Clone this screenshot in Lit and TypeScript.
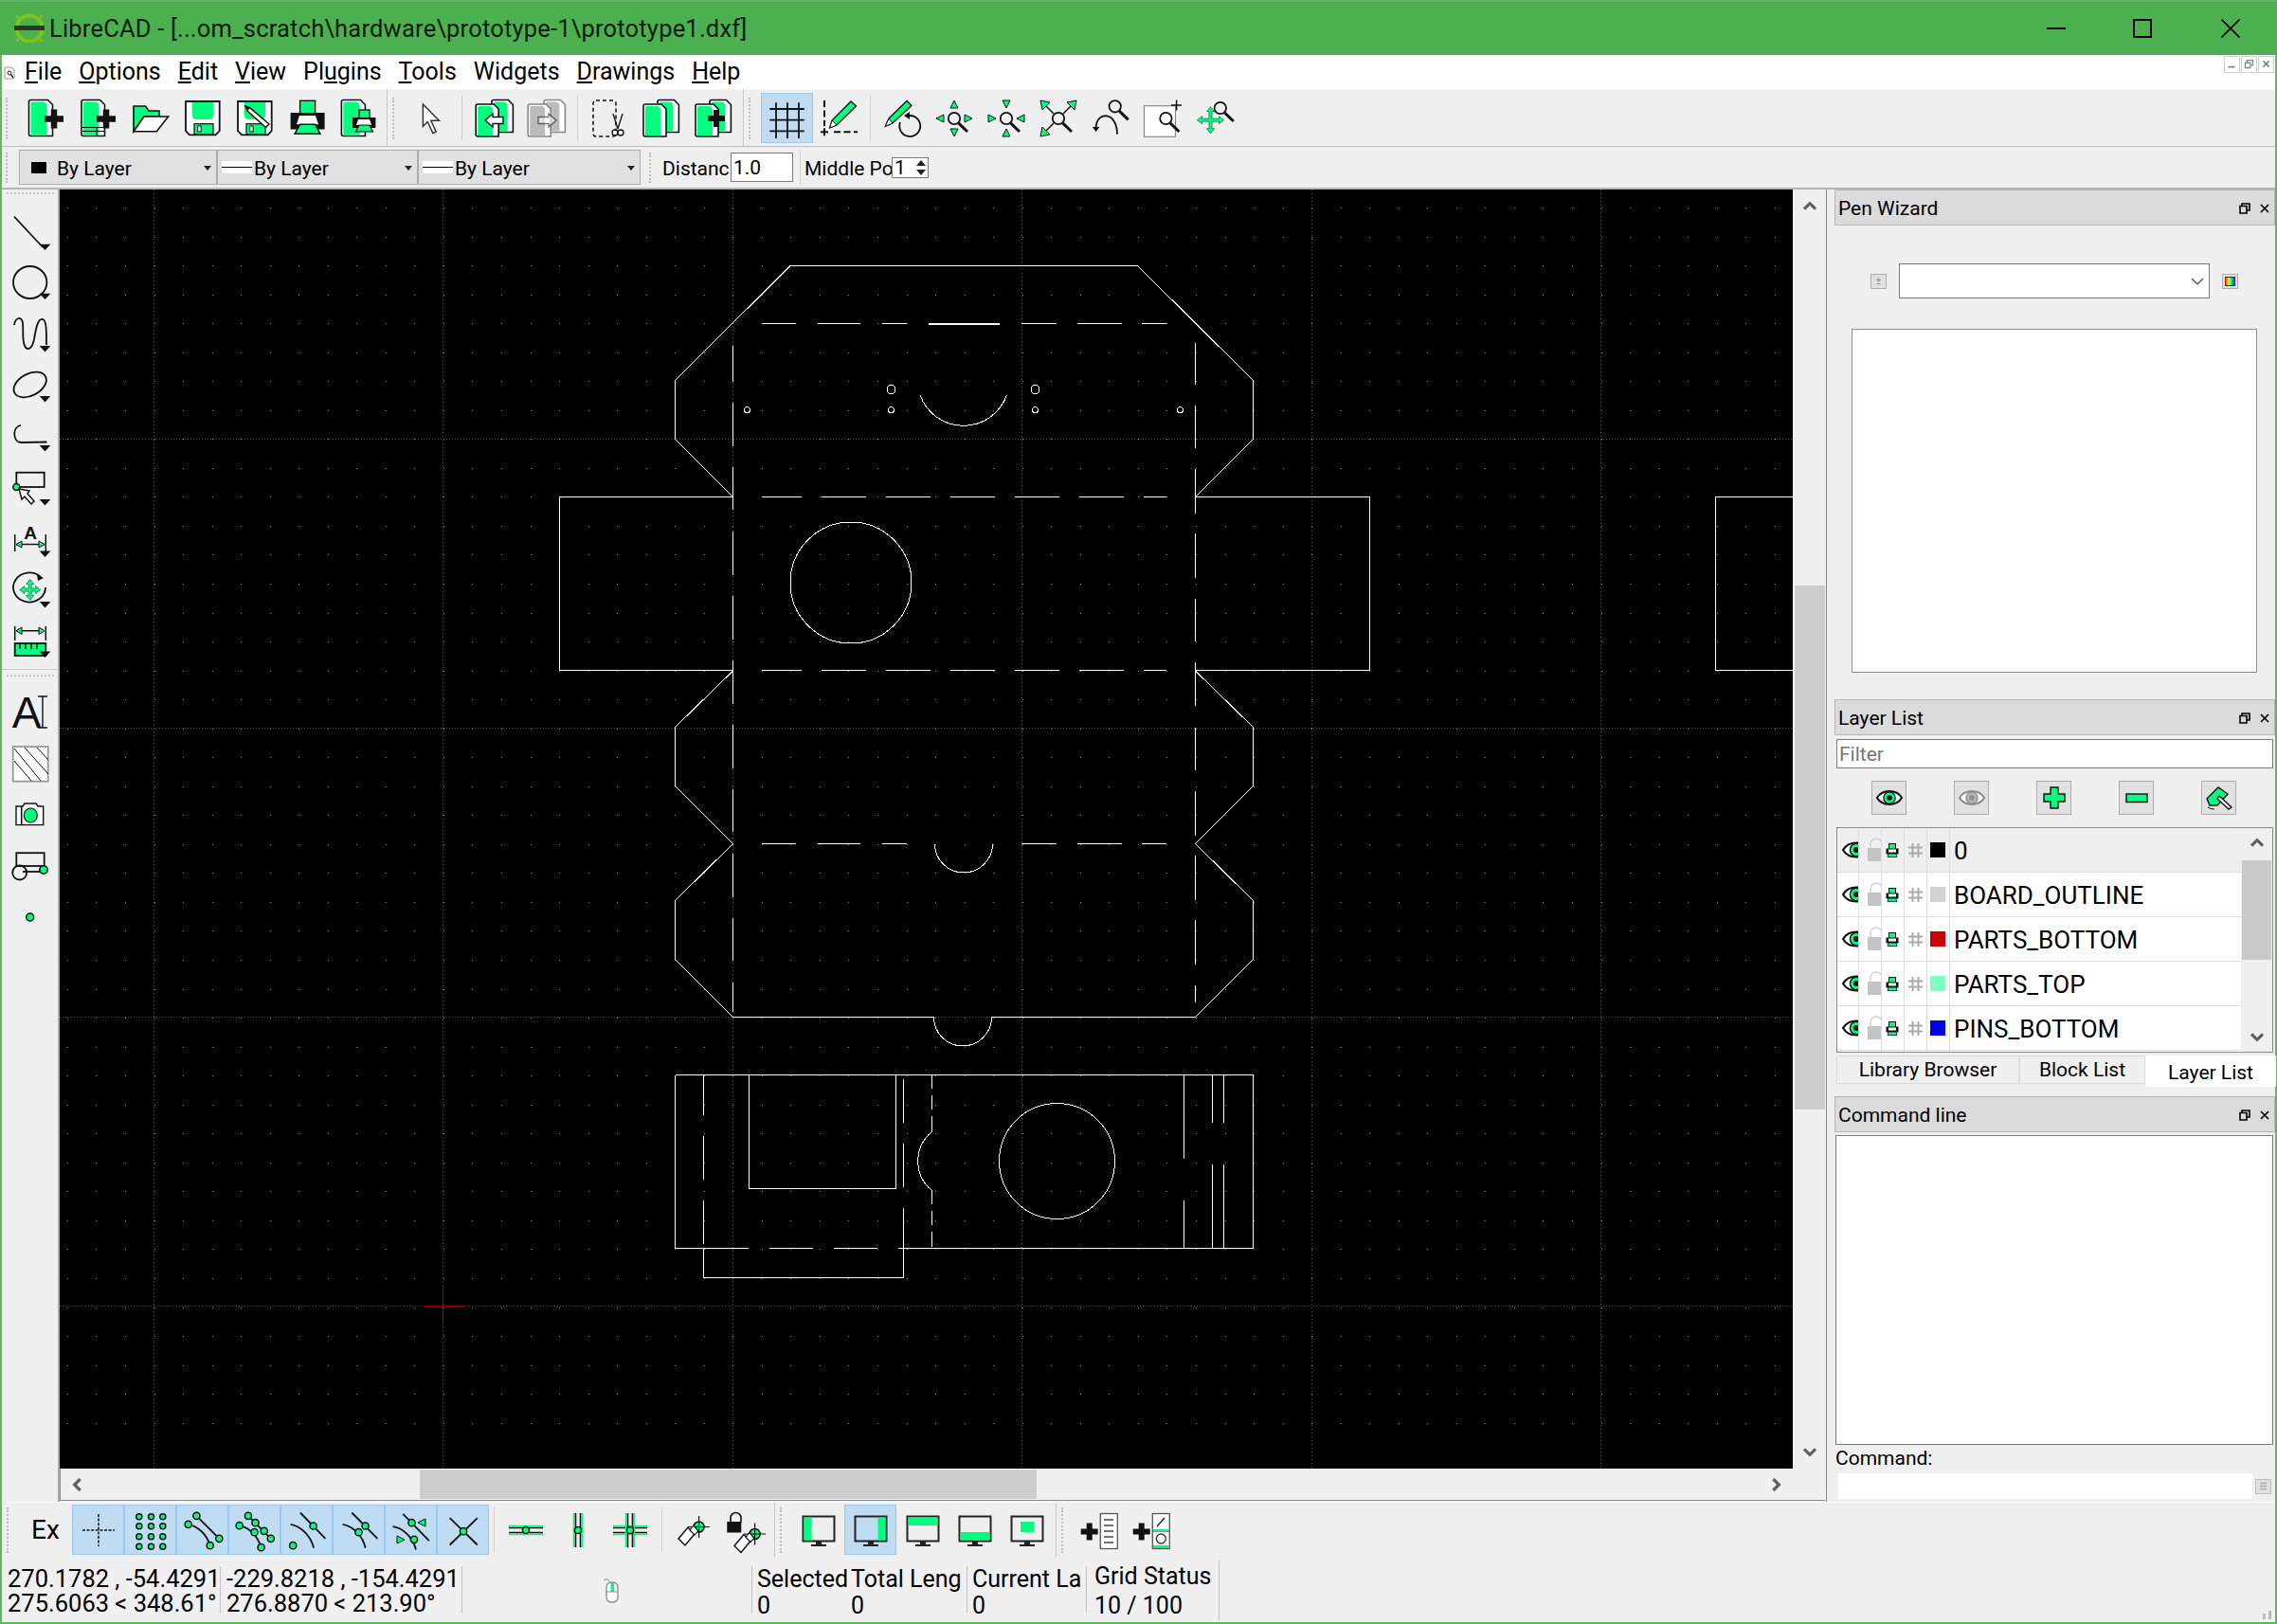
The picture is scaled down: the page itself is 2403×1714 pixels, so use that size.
import { LitElement, html, css, svg } from "lit";
import { customElement } from "lit/decorators.js";

const G = "#00ff7f";
const K = "#111";

// ---- small svg helpers for the toolbar icons (40x40 box unless noted)
const page = (x: number, y: number, w: number, h: number, fill = G, line = K) => svg`
  <path d="M${x + 2} ${y}H${x + w - 5}L${x + w} ${y + 5}V${y + h}H${x + 2}Q${x} ${y + h} ${x} ${y + h - 2}V${y + 2}Q${x} ${y} ${x + 2} ${y}Z" fill="#fff" stroke=${line} stroke-width="1.6"/>
  <path d="M${x + 3} ${y + 2}H${x + w - 10}Q${x + w - 6} ${y + 2} ${x + w - 6} ${y + 7}V${y + h - 1}H${x + 2}V${y + 3}Z" fill=${fill}/>`;
const plus = (cx: number, cy: number, r: number, t: number) => svg`
  <rect x=${cx - r} y=${cy - t / 2} width=${r * 2} height=${t} fill=${K}/>
  <rect x=${cx - t / 2} y=${cy - r} width=${t} height=${r * 2} fill=${K}/>`;
const tri = (p: string, f = G) => svg`<polygon points=${p} fill=${f} stroke=${K} stroke-width="1"/>`;
const glass = (cx: number, cy: number) => svg`
  <circle cx=${cx} cy=${cy} r="6.2" fill="none" stroke=${K} stroke-width="1.8"/>
  <line x1=${cx + 4.5} y1=${cy + 4.8} x2=${cx + 14} y2=${cy + 14} stroke=${K} stroke-width="3"/>`;
const dot = (cx: number, cy: number, r = 3.6) => svg`<circle cx=${cx} cy=${cy} r=${r} fill=${G} stroke=${K} stroke-width="1.5"/>`;
const curve = (d: string, w = 1.8) => svg`<path d=${d} fill="none" stroke=${K} stroke-width=${w}/>`;
const cross4 = (c: number, d: number, r: number) => svg`
  <path d="M${c} ${d - r}L${c + 4} ${d - r + 5}H${c + 1.5}V${d - 1.5}H${c + r - 5}V${d - 4}L${c + r} ${d}L${c + r - 5} ${d + 4}V${d + 1.5}H${c + 1.5}V${d + r - 5}H${c + 4}L${c} ${d + r}L${c - 4} ${d + r - 5}H${c - 1.5}V${d + 1.5}H${c - r + 5}V${d + 4}L${c - r} ${d}L${c - r + 5} ${d - 4}V${d - 1.5}H${c - 1.5}V${d - r + 5}H${c - 4}Z" fill=${G} stroke="#0a7a4a" stroke-width=".8"/>`;
const drop = (y: number) => svg`<polygon points="${29.7} ${y},${41.3} ${y},${35.5} ${y + 6.4}" fill=${K}/>`;
const floppy = svg`
  <path d="M2 2H37.7V33L33.7 37.3H6L2 33Z" fill="#fff" stroke=${K} stroke-width="1.8"/>
  <path d="M8.7 3H31V16Q31 21 26 21H13Q8.7 21 8.7 16Z" fill=${G}/>
  <rect x="11" y="25.7" width="20" height="11" fill=${G} stroke=${K} stroke-width="1.2"/>
  <rect x="14.7" y="28" width="3.4" height="6" fill="#fff" stroke=${K}/>`;
const arrowH = (x: number, y: number, dir: number, f = "#fff") => svg`
  <path d="M${x - 10 * dir} ${y}L${x - 2 * dir} ${y - 7}V${y - 3.5}H${x + 9 * dir}V${y + 3.5}H${x - 2 * dir}V${y + 7}Z" fill=${f} stroke=${K} stroke-width="1.4"/>`;
const mon = (r: number[]) => svg`
  <rect x="3.5" y="5.5" width="33" height="26" fill="none" stroke="#222" stroke-width="2"/>
  <rect x=${r[0]} y=${r[1]} width=${r[2]} height=${r[3]} fill=${G}/>
  <rect x="17" y="32" width="6" height="3" fill="#222"/><rect x="12" y="35" width="16" height="2" fill="#222"/>`;
const hand = (dx: number, dy: number) => svg`
  <g transform="translate(${dx} ${dy})">
    <polygon points="2,29 12,17 19,24 9,36" fill="#fff" stroke=${K} stroke-width="1.5"/>
    <circle cx="23.6" cy="16.5" r="5.5" fill=${G} stroke=${K} stroke-width="1.6"/>
    <path d="M23.6 5V28M12.5 16.5H35" stroke=${K} stroke-width="1.2"/>
    <polygon points="14,20 18,15 23,21 19,25" fill="#fff" stroke=${K} stroke-width="1.2"/>
  </g>`;
const restrictH = svg`<path d="M2 15.5H38M2 24.5H38" stroke=${G} stroke-width="1.6"/><path d="M2 17.5H38M2 22.5H38" stroke=${K} stroke-width="1.6"/>`;
const restrictV = svg`<path d="M15.5 2V38M24.5 2V38" stroke=${G} stroke-width="1.6"/><path d="M17.5 2V38M22.5 2V38" stroke=${K} stroke-width="1.6"/>`;

const I: Record<string, unknown> = {
  new: svg`${page(1.5, 0.5, 25, 38)}${plus(28, 20.5, 10, 6.5)}`,
  template: svg`${page(2, 0.5, 24.5, 38)}<path d="M3 29.5H26M3 33.5H26M18 29V38" stroke=${K} stroke-width="1.2" fill="none"/>${plus(28, 20.5, 10, 6.5)}`,
  open: svg`<path d="M2 7H14.6L18 12H29V18H13L2 33.7Z" fill=${G} stroke=${K} stroke-width="1.6"/><path d="M13 18H38.6L26.3 33.7H2Z" fill="#fff" stroke=${K} stroke-width="1.6"/>`,
  save: floppy,
  saveas: svg`${floppy}<path d="M10 7L15 9L35 26L31.5 29.5L12 12Z" fill="#fff" stroke=${K} stroke-width="1.5"/><path d="M10 7L15 9L12 12Z" fill=${K}/>`,
  print: svg`<rect x="12.6" y="1.3" width="16" height="16" fill=${G} stroke=${K} stroke-width="1.4"/><rect x="2.6" y="14" width="36" height="17.5" fill=${K}/><path d="M12 17H29L32 26.3H9Z" fill="#fff"/><path d="M12.6 26.3H28.6L34 36.3H7Z" fill=${G} stroke=${K} stroke-width="1.4"/>`,
  preview: svg`${page(1.4, 0.5, 25, 38)}<rect x="20" y="11" width="11" height="10" fill=${G} stroke=${K} stroke-width="1.3"/><rect x="13" y="19" width="24.4" height="11" fill=${K}/><path d="M19 21H31L33 27H17Z" fill="#fff"/><path d="M20 27H31L34.5 34H16.5Z" fill=${G} stroke=${K} stroke-width="1.2"/>`,
  pointer: svg`<path d="M12.4 5V28.5L17.2 23.5L23 35.7L26.2 34L20.8 22.2H29.3Z" fill="#fff" stroke="#333" stroke-width="1.5"/>`,
  prev: svg`${page(18, 0.5, 22.4, 34)}${page(1.2, 5, 24, 34)}${arrowH(21, 22, 1)}`,
  next: svg`${page(18, 0.5, 22.4, 34, "#bbb", "#888")}${page(1.2, 5, 24, 34, "#bbb", "#888")}<g opacity=".55">${arrowH(21, 22, -1)}</g>`,
  cut: svg`<rect x="3" y="1" width="24" height="38" rx="3" fill="none" stroke=${K} stroke-width="1.5" stroke-dasharray="4 3"/><path d="M24 15L29 31M34 15L29 31" stroke=${K} stroke-width="1.3" fill="none"/><circle cx="26" cy="35" r="3" fill="#f0f0f0" stroke=${K} stroke-width="1.3"/><circle cx="32" cy="35" r="3" fill="#f0f0f0" stroke=${K} stroke-width="1.3"/>`,
  copy: svg`${page(16, 0.5, 22.4, 34)}${page(1, 5, 24, 34)}`,
  paste: svg`${page(16, 0.5, 22.4, 34)}${page(1, 5, 24, 34)}${plus(23, 20, 9, 6)}`,
  grid: svg`<path d="M8 3.3V41M20 3.3V41M32 3.3V41M1.3 10H37.8M1.3 21.7H37.8M1.3 33.3H37.8" stroke=${K} stroke-width="1.8" fill="none"/>`,
  draft: svg`<path d="M4 1V28" stroke=${K} stroke-width="2" stroke-dasharray="7 3.5" fill="none"/>${plus(4, 34.3, 4, 2)}<path d="M14 34.3H39" stroke=${K} stroke-width="2" stroke-dasharray="7 3.5" fill="none"/><path d="M9.7 30L12 22L32 2L37.5 7L17 27Z" fill=${G} stroke=${K} stroke-width="1.3"/><path d="M9.7 30L12 22L17 27Z" fill="#fff" stroke=${K}/>`,
  rotdraft: svg`<path d="M2.4 28.3L6 20L25 1.5L30 6.5L10 25Z" fill=${G} stroke=${K} stroke-width="1.3"/><path d="M2.4 28.3L6 20L10 25Z" fill="#fff" stroke=${K}/>${curve("M28 17A11 11 0 1 1 18 24")}<path d="M28 13L22 17L28 21Z" fill=${K}/>`,
  zoomin: svg`${tri("20,1 24,9 16,9")}${tri("20,39 24,31 16,31")}${tri("1,20 9,16 9,24")}${tri("39,20 31,16 31,24")}${glass(20, 20)}`,
  zoomout: svg`${tri("20,9 24,1 16,1")}${tri("20,31 24,39 16,39")}${tri("9,20 1,16 1,24")}${tri("31,20 39,16 39,24")}${glass(20, 20)}`,
  zoomauto: svg`${curve("M7 7L15 15M33 7L25 15M7 33L15 25", 1.5)}${tri("1,1 11,3 3,11")}${tri("39,1 29,3 37,11")}${tri("1,39 3,29 11,37")}${glass(20, 20)}`,
  zoomprev: svg`${glass(24.7, 7.3)}${curve("M4.6 30C5 12 27 12 27 36.7")}<path d="M0.8 29H8.4L4.6 34Z" fill=${K}/>`,
  zoomwin: svg`<rect x="0.5" y="6.7" width="33" height="32.6" fill="#fff" stroke="#888" stroke-width="1.2"/>${glass(23.4, 20)}<path d="M29 6H40M34.6 .5V11.5" stroke=${K} stroke-width="1.5"/>`,
  zoompan: svg`${cross4(15.5, 21.7, 14)}${glass(25.8, 9)}`,

  // left tool column
  line: svg`<path d="M3 4.6L33 36.8" stroke=${K} stroke-width="1.6"/>${drop(33.7)}`,
  circle: svg`<ellipse cx="19.7" cy="20" rx="17.7" ry="17" fill="none" stroke=${K} stroke-width="1.8"/>${drop(31.7)}`,
  spline: svg`${curve("M3 11C4 3 11 1 12 9C13 17 11 26 14 33C17 39 22 36 24 26C26 14 28 4 33 5C37 6 37 15 37 32")}${drop(33)}`,
  ellipse: svg`<ellipse cx="19.7" cy="20" rx="18.5" ry="11.5" transform="rotate(-28 19.7 20)" fill="none" stroke=${K} stroke-width="1.8"/>${drop(32)}`,
  polyline: svg`${curve("M10 8.8C1 10 1 26 10 27L37.5 26.5")}${drop(30)}`,
  select: svg`<rect x="5.3" y="4.7" width="29.4" height="15.3" fill="none" stroke=${K} stroke-width="1.8"/>${dot(5.3, 20, 3.5)}<path d="M8 22L19 24L17 27L24 35L21 38L14 30L11 33Z" fill="#fff" stroke=${K} stroke-width="1.5"/>${drop(33)}`,
  dim: svg`<path d="M3.7 16V34M36.3 16V34M5 26.6H35" stroke=${K} stroke-width="1.5"/>${tri("5,26.6 11,23 11,30")}${tri("35,26.6 29,23 29,30")}<text x="20" y="21" text-anchor="middle" font-family="Liberation Sans" font-weight="700" font-size="19" fill=${K}>A</text>${drop(33.5)}`,
  modify: svg`${curve("M31 7A17 15.5 0 1 0 36 18")}<path d="M27 4L34 8L28 11Z" fill=${K}/>${cross4(19.7, 20.5, 11)}${drop(33)}`,
  info: svg`<path d="M3.7 5V20M36.3 5V20M5 9.8H35" stroke=${K} stroke-width="1.5"/>${tri("5,9.8 11,6 11,13.5")}${tri("35,9.8 29,6 29,13.5")}<rect x="3.7" y="23" width="32.6" height="13" fill=${G} stroke=${K} stroke-width="1.8"/><path d="M9 23V29M15 23V29M21 23V29M27 23V29" stroke=${K} stroke-width="1.4"/>${drop(31.5)}`,
  text: svg`<text x="16" y="36" text-anchor="middle" font-family="Liberation Sans" font-size="46" fill=${K}>A</text><path d="M28 3H38M28 36H38M33 3V36" stroke=${K} stroke-width="1.4"/>`,
  hatch: svg`<rect x="1.7" y="2" width="37" height="36.7" fill="#fff" stroke="#999" stroke-width="1.8"/><path d="M3 17L21 38M3 4L31 38M14 3L39 31M27 3L39 16" stroke=${K} stroke-width="1"/>`,
  image: svg`<path d="M5 11H12L14 8H26L28 11H33.7V30.6H5Z" fill="#fff" stroke=${K} stroke-width="1.4"/><path d="M10.7 11V30.6" stroke=${K} stroke-width="1.6"/><ellipse cx="20.3" cy="20.5" rx="7" ry="7.5" fill=${G} stroke=${K} stroke-width="1.2"/>`,
  block: svg`<rect x="5.3" y="6.2" width="29.4" height="13.8" fill="none" stroke=${K} stroke-width="1.8"/><path d="M12 26H30" stroke=${K} stroke-width="1.8"/><circle cx="8.7" cy="27" r="7.5" fill="none" stroke=${K} stroke-width="1.8"/>${dot(34, 24, 4.2)}`,
  point: dot(19.7, 20, 4),

  // snap bar
  free: svg`<path d="M20 3V37M3 20H37" stroke=${K} stroke-width="1.5" stroke-dasharray="3 1.6"/>`,
  sgrid: svg`${[7.8, 20.5, 32.8].map((x) => [5.8, 15.8, 26.8, 37.2].map((y) => dot(x, y, 3)))}`,
  send: svg`${curve("M13.4 4.8L37.3 28.8M4.7 13.8C15 16 24 24 27.7 36.2")}${dot(13.4, 4.8)}${dot(37.3, 28.8)}${dot(4.7, 13.8)}${dot(27.7, 36.2)}`,
  sentity: svg`${curve("M12.9 4.8L36.8 28.8M3.7 15.2C14 17 23 26 26.6 38.2")}${dot(12.9, 4.8)}${dot(20.5, 12.2)}${dot(29.7, 20.8)}${dot(36.8, 28.8)}${dot(3.7, 15.2)}${dot(19.5, 22.2)}${dot(26.6, 38.2)}`,
  scenter: svg`${curve("M12.9 1.5L39.4 28.8M2.7 13.8C14 16 24 26 27.1 38.8")}${dot(26.6, 15.5)}${dot(5.2, 36.2)}`,
  smiddle: svg`${curve("M12.3 1.5L39.4 28.8M2.6 13.8C14 16 24 26 26.6 38.8")}${dot(26.6, 15.5)}${dot(19.5, 22.2)}`,
  sdist: svg`${curve("M11.3 2.8L38.8 31.2M.5 16.2C12 18 22 28 25 40.5")}${dot(20.5, 12.2)}${dot(23, 29.8)}${tri("27,12 35,8 35,16")}${tri("13,30 5,26 5,34")}`,
  sinter: svg`${curve("M5.7 7.2L34.8 35.5M34.8 7.2L5.7 35.5")}${dot(20, 21.2)}`,
  rh: svg`${restrictH}${dot(20, 20)}`,
  rv: svg`${restrictV}${dot(20, 20)}`,
  rb: svg`${restrictH}${restrictV}${dot(20, 20)}`,
  relzero: hand(0, 0),
  lockzero: svg`<path d="M2 12V7A5.5 5.5 0 0 1 13 7V12" fill="none" stroke=${K} stroke-width="1.6"/><rect x="-1.7" y="11" width="15" height="11.5" fill=${K}/>${hand(4, 7.5)}`,
  vleft: mon([4.5, 6.5, 8, 24]),
  vright: mon([27.5, 6.5, 8, 24]),
  vtop: mon([4.5, 6.5, 31, 8.5]),
  vbottom: mon([4.5, 22, 31, 8.5]),
  vcenter: mon([13, 11, 14, 11]),
  addlist: svg`${plus(9.7, 21.5, 9, 6)}<rect x="21.3" y="2.5" width="18" height="37" fill="#fff" stroke="#555" stroke-width="1.3"/><path d="M25 9H35M25 15H35M25 21H35M25 27H35M25 33H35" stroke="#444" stroke-width="1.4"/>`,
  addpanel: svg`${plus(9.7, 21.5, 9, 6)}<rect x="21.3" y="2.5" width="18" height="37" fill="#fff" stroke="#555" stroke-width="1.3"/><path d="M21.3 21H39.3" stroke="#555" stroke-width="1.3"/><path d="M22 19H38.6V21H22ZM22 36H38.6V39H22Z" fill=${G}/><path d="M26 16L34 7" stroke=${K} stroke-width="1.2"/><circle cx="30.3" cy="29" r="5" fill="none" stroke="#333" stroke-width="1.3"/>`,
};

const icon = (n: string) => html`<svg class="ic" viewBox="0 0 40 40">${I[n]}</svg>`;
const chev = (rot: number) => html`<svg class="chev" viewBox="0 0 12 12" style="transform:rotate(${rot}deg)"><path d="M1.5 8L6 3.5L10.5 8" fill="none" stroke="#606060" stroke-width="2.4"/></svg>`;

// ---- the drawing; coordinates are page pixels (viewBox starts at the canvas corner)
const hSegs = (y: number, s: number[][]) => s.map(([a, b]) => `M${a} ${y}H${b}`).join("");
const vSegs = (x: number, s: number[][]) => s.map(([a, b]) => `M${x} ${a}V${b}`).join("");
const dashA = [[804, 840], [863, 908], [931, 957], [1078, 1115], [1137, 1184], [1205, 1231]];
const dashB = [[804, 846], [867, 914], [935, 982], [1003, 1050], [1071, 1118], [1139, 1186], [1207, 1231]];
const drawing = [
  "M773.5 524.5L712.5 463.5V401.5L834 280.5H1200.5L1322.5 401.5V463.5L1261.5 524.5",
  "M773.5 524.5H590.5V707.5H773.5M1261.5 524.5H1445.5V707.5H1261.5M1892 524.5H1810.5V707.5H1892",
  "M773.5 708L712.5 767.5V829.5L773.5 890.5L712.5 950.5V1012.5L773.5 1073.5H985.5A30.5 30.5 0 0 0 1046.5 1073.5H1261.5L1322.5 1012.5V950.5L1261.5 890.5L1322.5 829.5V767.5L1261.5 708",
  "M986.5 890.5A30.5 30.5 0 0 0 1047.5 890.5",
  hSegs(341.5, dashA), hSegs(890.5, dashA), hSegs(524.5, dashB), hSegs(707.5, dashB),
  vSegs(773.5, [[365, 403], [425, 471], [493, 538], [561, 607], [629, 675], [697, 743], [765, 811], [833, 878], [901, 947], [969, 1014], [1037, 1068]]),
  vSegs(1261.5, [[362, 406], [428, 473], [495, 542], [563, 610], [632, 677], [699, 745], [768, 813], [835, 882], [903, 950], [971, 1018], [1040, 1058]]),
  "M971 416.7A48.4 48.4 0 0 0 1062.5 416.7",
  // second part
  "M712.5 1134.5H1322.5V1317.5H948M926 1317.5H880M858 1317.5H812M790 1317.5H712.5V1134.5",
  "M790.5 1134.5V1254.5H945.5V1134.5",
  "M742.5 1317.5V1348.5H953.5V1275",
  vSegs(742.5, [[1134, 1177], [1199, 1245], [1267, 1313]]),
  vSegs(953.5, [[1139, 1185], [1207, 1253]]),
  vSegs(983.5, [[1134, 1149], [1156, 1171], [1178, 1195], [1256, 1271], [1278, 1293], [1300, 1316]]),
  "M983.5 1194.5A40 40 0 0 0 983.5 1256.5",
  vSegs(1249.5, [[1134, 1223], [1267, 1317]]),
  vSegs(1279.5, [[1134, 1185], [1229, 1317]]),
  vSegs(1291.5, [[1134, 1185], [1229, 1317]]),
].join("");
const holes = [[898, 615, 64], [940.5, 411, 4.5], [1092.5, 411, 4.5], [788.5, 432.5, 3], [940.5, 432.5, 3], [1092.5, 432.5, 3], [1245.5, 432.5, 3], [1115.5, 1225.5, 61]];

let gridDots = "";
for (let i = -20; i < 40; i++) {
  for (let j = -9; j < 35; j++) {
    const x = Math.round(681.7 + i * 30.54);
    const y = Math.round(463.3 + j * 30.54);
    if (x >= 63 && x < 1892 && y >= 200 && y < 1550) gridDots += `M${x} ${y}h1v1h-1z`;
  }
}
const metaX = [162.5, 467.5, 773.5, 1078.5, 1384.5, 1689.5];
const metaY = [463.5, 768.5, 1073.5, 1378.5];

const LAYERS = [
  { name: "0", color: "#000", current: true },
  { name: "BOARD_OUTLINE", color: "#d3d3d3" },
  { name: "PARTS_BOTTOM", color: "#c80000" },
  { name: "PARTS_TOP", color: "#7fffbf" },
  { name: "PINS_BOTTOM", color: "#0000f0" },
];

const TOOLS = ["line", "circle", "spline", "ellipse", "polyline", "select", "dim", "modify", "info"];
const TOOLS2 = ["text", "hatch", "image", "block", "point"];
const SNAPS = ["free", "sgrid", "send", "sentity", "scenter", "smiddle", "sdist", "sinter"];

@customElement("app-root")
export class AppRoot extends LitElement {
  static styles = css`
    :host {
      display: block;
      width: 2403px;
      height: 1714px;
      font-family: "Roboto", "Liberation Sans", sans-serif;
      color: #000;
      overflow: hidden;
    }
    .win {
      width: 2403px;
      height: 1714px;
      box-sizing: border-box;
      display: flex;
      flex-direction: column;
      background: #f0f0f0;
      border: solid #5fb763;
      border-width: 0 2px 2px 2px;
    }
    .ic { width: 40px; height: 40px; overflow: visible; flex: none; display: block; }
    .chev { width: 16px; height: 16px; display: block; }

    /* title bar */
    .title {
      height: 58px;
      margin: 0 -2px;
      flex: none;
      display: flex;
      align-items: center;
      background: #4caf50;
      border-top: 2px solid #5cb860;
      box-sizing: border-box;
      font-size: 25.5px;
      letter-spacing: 0.2px;
      color: #0c1c0c;
    }
    .logo { width: 34px; height: 34px; margin: 0 4px 0 14px; flex: none; }
    .title .name { flex: 1; }
    .wbtn { width: 20px; height: 20px; flex: none; display: block; }
    .wbtn.min { margin-right: 71px; }
    .wbtn.max { margin-right: 73px; }
    .wbtn.cls { margin-right: 39px; }

    /* menu */
    .menu {
      height: 37px;
      flex: none;
      display: flex;
      align-items: center;
      background: #fff;
      border-bottom: 1px solid #f4f4f4;
      box-sizing: border-box;
      font-size: 25px;
      position: relative;
    }
    .menu .doc { width: 12px; height: 14px; margin: 2px 10px 0 2px; }
    .menu span { margin-right: 18px; line-height: 30px; }
    .menu u { text-underline-offset: 2px; }
    .mdi { position: absolute; right: 1px; top: 1px; display: flex; gap: 1px; }
    .mdi svg { width: 17px; height: 18px; border: 1px solid #cfcfcf; box-sizing: border-box; background: #fff; display: block; }

    /* toolbars */
    .bar { display: flex; align-items: center; flex: none; box-sizing: border-box; background: #efefef; }
    .bar1 { height: 60px; border-bottom: 1px solid #bdbdbd; }
    .bar2 { height: 45px; border-bottom: 2px solid #b5b5b5; font-size: 21px; }
    .handle { width: 2px; height: 44px; border-left: 2px dotted #bcbcbc; margin: 0 13px 0 4px; flex: none; box-sizing: border-box; }
    .tb {
      width: 55px;
      height: 53px;
      flex: none;
      display: flex;
      align-items: center;
      justify-content: center;
      box-sizing: border-box;
      border: 1px solid transparent;
    }
    .tb.on { background: #c0dcf3; border-color: #99c9ef; }
    .sep { width: 1px; height: 47px; background: #cfcfcf; flex: none; }
    .sep.full { height: 100%; background: #c8c8c8; }
    .combo {
      height: 37px;
      box-sizing: border-box;
      background: #e1e1e1;
      border: 1px solid #adadad;
      display: flex;
      align-items: center;
      position: relative;
      flex: none;
      padding-top: 2px;
    }
    .combo .sw { width: 16px; height: 12px; background: #000; margin: -2px 11px 0 12px; }
    .combo .ln { width: 32px; height: 13px; background: linear-gradient(#fff 6px, #000 6px, #000 7px, #fff 7px); margin: -2px 2px 0 4px; }
    .combo .ar { position: absolute; right: 5px; top: 16px; width: 0; height: 0; border: 4px solid transparent; border-top: 5px solid #222; border-bottom: 0; }
    .field { height: 31px; box-sizing: border-box; background: #fff; border: 1px solid #7a7a7a; flex: none; display: flex; align-items: center; padding-left: 2px; }
    .spin { height: 22px; width: 39px; box-sizing: border-box; background: #fff; border: 1px solid #7a7a7a; display: flex; align-items: center; justify-content: space-between; padding-left: 2px; flex: none; }
    .spin svg { width: 14px; height: 20px; }
    .lbl { flex: none; white-space: nowrap; padding-top: 2px; }

    /* main */
    .main { flex: 1; min-height: 0; display: flex; }
    .tools { width: 61px; flex: none; display: flex; flex-direction: column; align-items: center; border-right: 2px solid #ababab; box-sizing: border-box; }
    .tools .hz { width: 50px; height: 0; border-top: 2px dotted #c4c4c4; flex: none; }
    .tools .t { height: 54px; flex: none; display: flex; align-items: center; justify-content: center; width: 60px; }
    .tools .rule { width: 60px; height: 1px; background: #c8c8c8; margin: 3px 0 5px; flex: none; }

    .center { width: 1864px; flex: none; display: grid; grid-template-columns: 1829px 34px; grid-template-rows: 1350px 34px; border-right: 1px solid #8a8a8a; }
    .cv { width: 1829px; height: 1350px; background: #000; display: block; }
    .vsb { background: #f0f0f0; display: flex; flex-direction: column; align-items: center; justify-content: space-between; padding: 10px 0; box-sizing: border-box; position: relative; border-left: 1px solid #fff; }
    .vsb i { position: absolute; left: 1px; right: 0; top: 418px; height: 553px; background: #cdcdcd; }
    .hsb { background: #f0f0f0; display: flex; align-items: center; justify-content: space-between; padding: 0 10px; box-sizing: border-box; position: relative; border-top: 1px solid #fff; border-bottom: 1px solid #8a8a8a; border-left: 1px solid #8a8a8a; }
    .hsb i { position: absolute; top: 0; bottom: 1px; left: 379px; width: 651px; background: #cdcdcd; }
    .cnr { border-bottom: 1px solid #8a8a8a; }

    /* docks */
    .docks { flex: 1; min-width: 0; font-size: 21px; }
    .dtitle {
      height: 38px;
      margin-left: 8px;
      box-sizing: border-box;
      background: #dbdbdb;
      border: 1px solid #b5b5b5;
      display: flex;
      align-items: center;
      padding: 1px 0 0 3px;
    }
    .dtitle span { flex: 1; }
    .dtitle svg { width: 12px; height: 12px; margin-right: 9px; display: block; }
    .dtitle svg:last-child { margin-right: 4px; }
    .pen { height: 500px; box-sizing: border-box; padding: 40px 0 0 46px; }
    .penrow { display: flex; align-items: center; height: 37px; }
    .mini { width: 17px; height: 16px; box-sizing: border-box; background: #e1e1e1; border: 1px solid #adadad; flex: none; display: flex; align-items: center; justify-content: center; font-size: 10px; color: #888; }
    .pcombo { width: 328px; height: 37px; margin: 0 13px; box-sizing: border-box; background: #fff; border: 1px solid #7a7a7a; display: flex; align-items: center; justify-content: flex-end; padding-right: 5px; }
    .pcombo svg { width: 14px; height: 8px; }
    .plist { width: 428px; height: 363px; margin: 32px 0 0 -20px; box-sizing: border-box; background: #fff; border: 1px solid #8a8a8a; }
    .filter { height: 31px; margin: 4px 2px 0 10px; box-sizing: border-box; background: #fff; border: 1px solid #7a7a7a; color: #777; padding-left: 2px; line-height: 30px; }
    .lbtns { display: flex; gap: 50px; margin: 13px 0 0 47px; }
    .lbtn { width: 37px; height: 36px; box-sizing: border-box; background: #e1e1e1; border: 1px solid #adadad; display: flex; align-items: center; justify-content: center; }
    .lbtn svg { width: 28px; height: 28px; display: block; overflow: visible; }
    .ltable { height: 238px; margin: 13px 2px 0 10px; box-sizing: border-box; border: 1px solid #8a8a8a; background: #fff; display: flex; overflow: hidden; }
    .lrows { width: 426px; flex: none; overflow: hidden; }
    .lrow { height: 47px; box-sizing: border-box; border-bottom: 1px solid #dedede; display: grid; grid-template-columns: 23px 24px 24px 24px 24px 1fr; font-size: 26px; }
    .lrow.cur { background: #efefef; }
    .lrow > div { border-right: 1px solid #dedede; display: flex; align-items: center; overflow: hidden; box-sizing: border-box; }
    .lrow > div:last-child { border-right: 0; padding: 2px 0 0 4px; }
    .lrow svg { display: block; flex: none; }
    .lrow .swatch { width: 16px; height: 16px; margin-left: 3px; }
    .lsb { flex: 1; background: #f0f0f0; position: relative; display: flex; flex-direction: column; align-items: center; justify-content: space-between; padding: 8px 0; box-sizing: border-box; }
    .lsb i { position: absolute; left: 1px; right: 1px; top: 34px; height: 105px; background: #c9c9c9; }
    .tabs { display: flex; height: 33px; margin: 3px 0 0 10px; align-items: flex-start; }
    .tab { height: 30px; box-sizing: border-box; background: #f0f0f0; border: 1px solid #dcdcdc; display: flex; align-items: center; justify-content: center; flex: none; }
    .tab.on { height: 33px; background: #fff; border: 0; width: 138px; padding-top: 3px; }
    .cmd { height: 327px; margin: 3px 2px 0 9px; box-sizing: border-box; background: #fff; border: 1px solid #7a7a7a; }
    .clabel { margin: 1px 0 0 9px; line-height: 26px; }
    .crow { display: flex; align-items: center; margin: 3px 0 0 12px; }
    .cinput { width: 437px; height: 27px; background: #fff; flex: none; }
    .cbtn { width: 17px; height: 16px; margin-left: 3px; box-sizing: border-box; background: #e1e1e1; border: 1px solid #bdbdbd; display: flex; align-items: center; justify-content: center; }
    .cbtn svg { width: 9px; height: 9px; }

    /* bottom */
    .bar3 { height: 60px; border-top: 1px solid #fafafa; padding-bottom: 2px; }
    .ex { width: 31px; font-size: 28px; flex: none; }
    .status { flex: none; height: 67px; display: flex; font-size: 25.5px; position: relative; background: #f0f0f0; overflow: hidden; }
    .scol { box-sizing: border-box; flex: none; white-space: nowrap; height: 50px; border-right: 1px solid #c4c4c4; padding: 1px 0 0 6px; line-height: 25.7px; margin-top: 8px; }
    .scol.two { line-height: 28px; padding-top: 0; font-size: 25px; }
    .scol.grid { line-height: 31px; padding-top: 1px; height: 63px; margin-top: 2px; font-size: 25px; }
    .sub { display: inline-block; width: 99px; vertical-align: top; }
    .sub.wide { width: 118px; }
    .mouse { display: flex; align-items: center; justify-content: center; padding: 2px 0 0 0; }
    .mouse svg { width: 20px; height: 28px; margin-left: 8px; }
    .grip { position: absolute; right: 4px; bottom: 3px; width: 9px; height: 9px; }
  `;

  private btns(names: string[], on: string[] = []) {
    return names.map((n) => html`<div class="tb ${on.includes(n) ? "on" : ""}">${icon(n)}</div>`);
  }

  private dockTitle(t: string) {
    return html`<div class="dtitle">
      <span>${t}</span>
      <svg viewBox="0 0 12 12"><path d="M3 3V1H11V8H8.5M1 3.5H8V11H1Z" fill="none" stroke="#000" stroke-width="1.6"/></svg>
      <svg viewBox="0 0 12 12"><path d="M2 2L10 10M10 2L2 10" stroke="#000" stroke-width="1.6"/></svg>
    </div>`;
  }

  private eye(s: number, col = K, iris = G) {
    return svg`<g transform="scale(${s})">
      <path d="M1 14C7 4 23 4 29 14C23 24 7 24 1 14Z" fill="#fff" stroke=${col} stroke-width="2.2"/>
      <circle cx="15" cy="14" r="6.6" fill=${iris} stroke=${col} stroke-width="1.4"/>
      <circle cx="15" cy="14" r="3" fill=${col}/></g>`;
  }

  private layerRow(l: { name: string; color: string; current?: boolean }) {
    return html`<div class="lrow ${l.current ? "cur" : ""}">
      <div><svg width="30" height="28" viewBox="0 0 30 28" style="margin-left:5px">${this.eye(1)}</svg></div>
      <div><svg width="24" height="26" viewBox="0 0 24 26" style="margin:-2px 0 0 0"><path d="M12 13V8A6 6 0 0 1 24 8V13" fill="none" stroke="#d0d0d0" stroke-width="1.5"/><rect x="9" y="12" width="15" height="14" fill="#c4c4c4"/></svg></div>
      <div><svg width="14" height="15" viewBox="0 0 14 15" style="margin-left:4px"><rect x="3.5" y="0.5" width="7" height="6" fill=${G} stroke=${K}/><rect x="0.5" y="5.5" width="13" height="6" fill=${K}/><rect x="3" y="6.5" width="8" height="3" fill="#fff"/><path d="M3 11H11L12 14.5H2Z" fill=${G} stroke=${K} stroke-width=".8"/></svg></div>
      <div><svg width="15" height="15" viewBox="0 0 15 15" style="margin-left:4px"><path d="M4.5 0V15M10.5 0V15M0 4.5H15M0 10.5H15" stroke="#aaa" stroke-width="2"/></svg></div>
      <div><i class="swatch" style="background:${l.color}"></i></div>
      <div>${l.name}</div>
    </div>`;
  }

  render() {
    return html`<div class="win">
      <div class="title">
        <svg class="logo" viewBox="0 0 34 34">
          <circle cx="17" cy="17" r="13.5" fill="none" stroke="#7cc320" stroke-width="4"/>
          <rect x="1" y="14" width="32" height="5" fill="#30342c"/>
          <path d="M3 3h3v3h-3zM28 3h3v3h-3zM3 28h3v3h-3zM28 28h3v3h-3z" fill="#7cc320"/>
        </svg>
        <div class="name">LibreCAD - [...om_scratch\\hardware\\prototype-1\\prototype1.dxf]</div>
        <svg class="wbtn min" viewBox="0 0 20 20"><path d="M0 10H20" stroke="#000" stroke-width="2"/></svg>
        <svg class="wbtn max" viewBox="0 0 20 20"><rect x="1" y="1" width="18" height="18" fill="none" stroke="#000" stroke-width="2"/></svg>
        <svg class="wbtn cls" viewBox="0 0 20 20"><path d="M.5 .5L19.5 19.5M19.5 .5L.5 19.5" stroke="#000" stroke-width="1.6"/></svg>
      </div>

      <div class="menu">
        <svg class="doc" viewBox="0 0 12 14"><path d="M1 1H8L11 4V13H1Z" fill="#fff" stroke="#999"/><circle cx="6" cy="7" r="2" fill="none" stroke="#222"/><path d="M7.5 8.5L10 12" stroke="#222" stroke-width="1.4"/></svg>
        <span><u>F</u>ile</span><span><u>O</u>ptions</span><span><u>E</u>dit</span><span><u>V</u>iew</span>
        <span>Pl<u>u</u>gins</span><span><u>T</u>ools</span><span>Widgets</span><span><u>D</u>rawings</span><span><u>H</u>elp</span>
        <div class="mdi">
          <svg viewBox="0 0 17 18"><path d="M4 12H12" stroke="#7b8794" stroke-width="2"/></svg>
          <svg viewBox="0 0 17 18"><path d="M6 6V4H13V10H11M4 7H10V13H4Z" fill="none" stroke="#7b8794" stroke-width="1.5"/></svg>
          <svg viewBox="0 0 17 18"><path d="M5 5L12 12M12 5L5 12" stroke="#7b8794" stroke-width="2"/></svg>
        </div>
      </div>

      <div class="bar bar1">
        <div class="handle"></div>
        ${this.btns(["new", "template", "open", "save", "saveas", "print", "preview"])}
        <div class="sep full" style="margin-left:2px"></div>
        <div class="handle" style="margin:0 10px 0 5px"></div>
        ${this.btns(["pointer"])}
        <div class="sep" style="margin:0 5px 0 6px"></div>
        ${this.btns(["prev", "next"])}
        <div class="sep" style="margin:0 5px 0 6px"></div>
        ${this.btns(["cut", "copy", "paste"])}
        <div class="sep full" style="margin-left:4px"></div>
        <div class="handle" style="margin:0 11px 0 5px"></div>
        ${this.btns(["grid", "draft"], ["grid"])}
        <div class="sep" style="margin:0 5px 0 5px"></div>
        ${this.btns(["rotdraft", "zoomin", "zoomout", "zoomauto", "zoomprev", "zoomwin", "zoompan"])}
      </div>

      <div class="bar bar2">
        <div class="handle" style="height:32px;margin-right:12px"></div>
        <div class="combo" style="width:209px"><i class="sw"></i>By Layer<i class="ar"></i></div>
        <div class="combo" style="width:212px"><i class="ln"></i>By Layer<i class="ar"></i></div>
        <div class="combo" style="width:235px"><i class="ln"></i>By Layer<i class="ar"></i></div>
        <div class="handle" style="height:32px;margin:0 12px 0 9px"></div>
        <div class="lbl" style="width:72px">Distanc</div>
        <div class="field" style="width:66px">1.0</div>
        <div class="sep" style="height:36px;margin:0 4px 0 7px"></div>
        <div class="lbl" style="width:92px">Middle Po</div>
        <div class="spin">1
          <svg viewBox="0 0 14 20"><path d="M2 8L7 2L12 8Z" fill="#222"/><path d="M2 12L7 18L12 12Z" fill="#222"/></svg>
        </div>
      </div>

      <div class="main">
        <div class="tools">
          <div class="hz" style="margin-top:3px"></div>
          <div style="height:12px;flex:none"></div>
          ${TOOLS.map((n) => html`<div class="t">${icon(n)}</div>`)}
          <div class="rule"></div>
          <div class="hz"></div>
          <div style="height:11px;flex:none"></div>
          ${TOOLS2.map((n) => html`<div class="t">${icon(n)}</div>`)}
        </div>

        <div class="center">
          <svg class="cv" viewBox="63 200 1829 1350" shape-rendering="crispEdges">
            <path d=${gridDots} fill="#8c8c8c"/>
            ${metaX.map((x) => svg`<path d="M${x} 200V1550" stroke="#5a5a5a" stroke-dasharray="1 3" fill="none"/>`)}
            ${metaY.map((y) => svg`<path d="M63 ${y}H1892" stroke="#505050" stroke-dasharray="1 2" fill="none"/>`)}
            <path d="M447 1378.5H490M467.5 1356V1399" stroke="#a00000" fill="none"/>
            <path d="M980 341.5H1055" stroke="#fff" stroke-width="2" fill="none"/>
            <path d=${drawing} stroke="#fff" fill="none"/>
            ${holes.map(([x, y, r]) => svg`<circle cx=${x} cy=${y} r=${r} stroke="#fff" fill="none"/>`)}
          </svg>
          <div class="vsb">${chev(0)}${chev(180)}<i></i></div>
          <div class="hsb">${chev(-90)}${chev(90)}<i></i></div>
          <div class="cnr"></div>
        </div>

        <div class="docks">
          ${this.dockTitle("Pen Wizard")}
          <div class="pen">
            <div class="penrow">
              <div class="mini">±</div>
              <div class="pcombo"><svg viewBox="0 0 14 8"><path d="M1 1L7 7L13 1" fill="none" stroke="#444" stroke-width="1.2"/></svg></div>
              <div class="mini" style="padding:2px">
                <svg width="12" height="10" viewBox="0 0 12 10"><defs><linearGradient id="rb"><stop offset="0" stop-color="#f00"/><stop offset=".35" stop-color="#ff0"/><stop offset=".6" stop-color="#0f8"/><stop offset="1" stop-color="#00f"/></linearGradient></defs><rect width="12" height="10" fill="url(#rb)" stroke="#222"/></svg>
              </div>
            </div>
            <div class="plist"></div>
          </div>

          ${this.dockTitle("Layer List")}
          <div class="filter">Filter</div>
          <div class="lbtns">
            <div class="lbtn"><svg viewBox="0 0 30 28">${this.eye(1)}</svg></div>
            <div class="lbtn"><svg viewBox="0 0 30 28">${this.eye(1, "#8d8d8d", "#b5b5b5")}</svg></div>
            <div class="lbtn"><svg viewBox="0 0 28 28"><path d="M10 3H18V10H25V18H18V25H10V18H3V10H10Z" fill=${G} stroke=${K} stroke-width="1.4"/></svg></div>
            <div class="lbtn"><svg viewBox="0 0 28 28"><rect x="3" y="10" width="22" height="8.5" fill=${G} stroke=${K} stroke-width="1.4"/></svg></div>
            <div class="lbtn"><svg viewBox="0 0 28 28"><path d="M1 15L13 3L23 10L12 22H4Z" fill=${G} stroke=${K} stroke-width="1.4"/><path d="M14 12L27 24L24 26L12 15Z" fill="#fff" stroke=${K} stroke-width="1.4"/><path d="M2 24Q5 26 9 26" stroke=${K} fill="none"/></svg></div>
          </div>
          <div class="ltable">
            <div class="lrows">${LAYERS.map((l) => this.layerRow(l))}${this.layerRow({ name: "", color: "transparent" })}</div>
            <div class="lsb">${chev(0)}${chev(180)}<i></i></div>
          </div>
          <div class="tabs">
            <div class="tab" style="width:193px">Library Browser</div>
            <div class="tab" style="width:133px">Block List</div>
            <div class="tab on">Layer List</div>
          </div>
          <div style="height:10px"></div>
          ${this.dockTitle("Command line")}
          <div class="cmd"></div>
          <div class="clabel">Command:</div>
          <div class="crow">
            <div class="cinput"></div>
            <div class="cbtn"><svg viewBox="0 0 9 9"><path d="M1 1.5H8M1 4.5H8M1 7.5H8" stroke="#aaa" stroke-width="1.6"/></svg></div>
          </div>
        </div>
      </div>

      <div class="bar bar3">
        <div class="handle" style="height:48px;margin:0 24px 0 5px"></div>
        <div class="ex">Ex</div>
        <div style="width:12px;flex:none"></div>
        ${this.btns(SNAPS, SNAPS)}
        <div class="sep" style="margin:0 5px 0 5px"></div>
        ${this.btns(["rh", "rv", "rb"])}
        <div class="sep" style="margin:0 7px 0 6px"></div>
        ${this.btns(["relzero", "lockzero"])}
        <div class="sep full" style="margin:0 0 0 1px"></div>
        <div class="handle" style="height:48px;margin:0 11px 0 5px"></div>
        ${this.btns(["vleft", "vright", "vtop", "vbottom", "vcenter"], ["vright"])}
        <div class="sep full" style="margin-left:3px"></div>
        <div class="handle" style="height:48px;margin:0 10px 0 5px"></div>
        ${this.btns(["addlist", "addpanel"])}
      </div>

      <div class="status">
        <div class="scol" style="width:231px">270.1782 , -54.4291<br />275.6063 &lt; 348.61°</div>
        <div class="scol" style="width:255px">-229.8218 , -154.4291<br />276.8870 &lt; 213.90°</div>
        <div class="scol mouse" style="width:306px">
          <svg viewBox="0 0 20 28"><path d="M2 3Q6 0 8 4" fill="none" stroke="#888"/><rect x="5" y="5" width="12" height="21" rx="5" fill="#fff" stroke="#8a8a8a" stroke-width="1.3"/><rect x="9.5" y="6" width="3.5" height="9" fill=${G}/><path d="M5 15H17" stroke="#8a8a8a"/></svg>
        </div>
        <div class="scol two" style="width:227px;padding-left:5px"><div class="sub">Selected<br />0</div><div class="sub wide">Total Leng<br />0</div></div>
        <div class="scol two" style="width:126px;padding-left:5px">Current La<br />0</div>
        <div class="scol grid" style="width:140px;padding-left:8px">Grid Status<br />10 / 100</div>
        <svg class="grip" viewBox="0 0 9 9"><path d="M6 0h3v3h-3zM0 3h3v3h-3zM6 3h3v3h-3zM0 6h3v3h-3zM6 6h3v3h-3z" fill="#bdbdbd"/></svg>
      </div>
    </div>`;
  }
}
